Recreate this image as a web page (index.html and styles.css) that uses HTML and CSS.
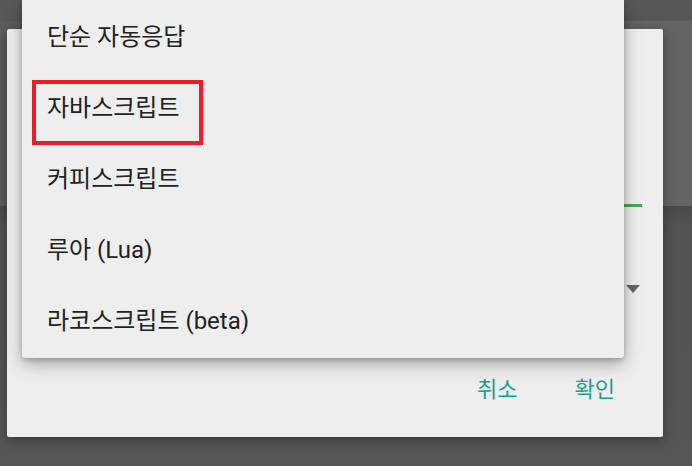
FILE: index.html
```html
<!DOCTYPE html>
<html lang="ko">
<head>
    <meta charset="UTF-8">
    <meta name="viewport" content="width=device-width, initial-scale=1.0">
    <title>스크립트 선택</title>
    <link rel="stylesheet" href="styles.css">
</head>
<body>

    <div class="statusBar"></div>
    <div class="appBar"></div>
    <div class="content"></div>

    <!-- dialog behind the dropdown -->
    <div class="dialog">
        <div class="dialogTitle"></div>
        <div class="nameField"></div>
        <div class="spinnerRow">
            <span class="spinnerArrow"></span>
        </div>
        <div class="actions">
            <button class="textButton">취소</button>
            <button class="textButton">확인</button>
        </div>
    </div>

    <!-- script type dropdown -->
    <div class="menu">
        <div class="menuItem">단순 자동응답</div>
        <div class="menuItem">자바스크립트</div>
        <div class="menuItem">커피스크립트</div>
        <div class="menuItem">루아 (Lua)</div>
        <div class="menuItem">라코스크립트 (beta)</div>
        <div class="highlight"></div>
    </div>

</body>
</html>
```

FILE: styles.css
```css
body {
    margin: 0;
    height: 466px;
    overflow: hidden;
    display: flex;
    flex-direction: column;
    background-color: #505050;
    font-family: Roboto, "Noto Sans CJK KR", sans-serif;
}

.statusBar {
    height: 21px;
    background-color: #575757;
}

.appBar {
    height: 185px;
    background: linear-gradient(to right, #5c5c5c, #646464);
}

.content {
    flex: 1;
    background: linear-gradient(to bottom, #484848, #525252 20px, #555);
}

.dialog {
    position: absolute;
    left: 7px;
    top: 29px;
    width: 656px;
    height: 408px;
    box-sizing: border-box;
    padding: 0 21px;
    background-color: #eeeeee;
    border-radius: 2px;
    box-shadow: 0 3px 12px rgba(0, 0, 0, 0.35);
}

.dialogTitle {
    height: 150px;
}

.nameField {
    height: 25px;
    border-bottom: 3px solid #47a94c;
}

.spinnerRow {
    display: flex;
    justify-content: flex-end;
    padding-right: 2px;
    margin-top: 78px;
    height: 8px;
}

.spinnerArrow {
    width: 0;
    height: 0;
    border-left: 7px solid transparent;
    border-right: 7px solid transparent;
    border-top: 8px solid #666;
}

.actions {
    display: flex;
    justify-content: flex-end;
    gap: 57px;
    margin-top: 84px;
    padding-right: 27px;
}

.textButton {
    padding: 0;
    border: none;
    background: none;
    font-family: Roboto, "Noto Sans CJK KR", sans-serif;
    font-size: 22px;
    line-height: 26px;
    color: #17a091;
    cursor: pointer;
}

.menu {
    position: absolute;
    left: 22px;
    top: 0;
    width: 602px;
    height: 358px;
    box-sizing: border-box;
    padding-top: 2px;
    background-color: #eeeeee;
    border-radius: 0 0 3px 3px;
    box-shadow: 0 6px 18px rgba(0, 0, 0, 0.3), 0 2px 5px rgba(0, 0, 0, 0.2);
}

.menuItem {
    height: 71px;
    line-height: 71px;
    padding-left: 25px;
    font-size: 24px;
    color: #212121;
}

.highlight {
    position: absolute;
    left: 10px;
    top: 80px;
    width: 171px;
    height: 65px;
    box-sizing: border-box;
    border: 4px solid #ec1c24;
}
```
